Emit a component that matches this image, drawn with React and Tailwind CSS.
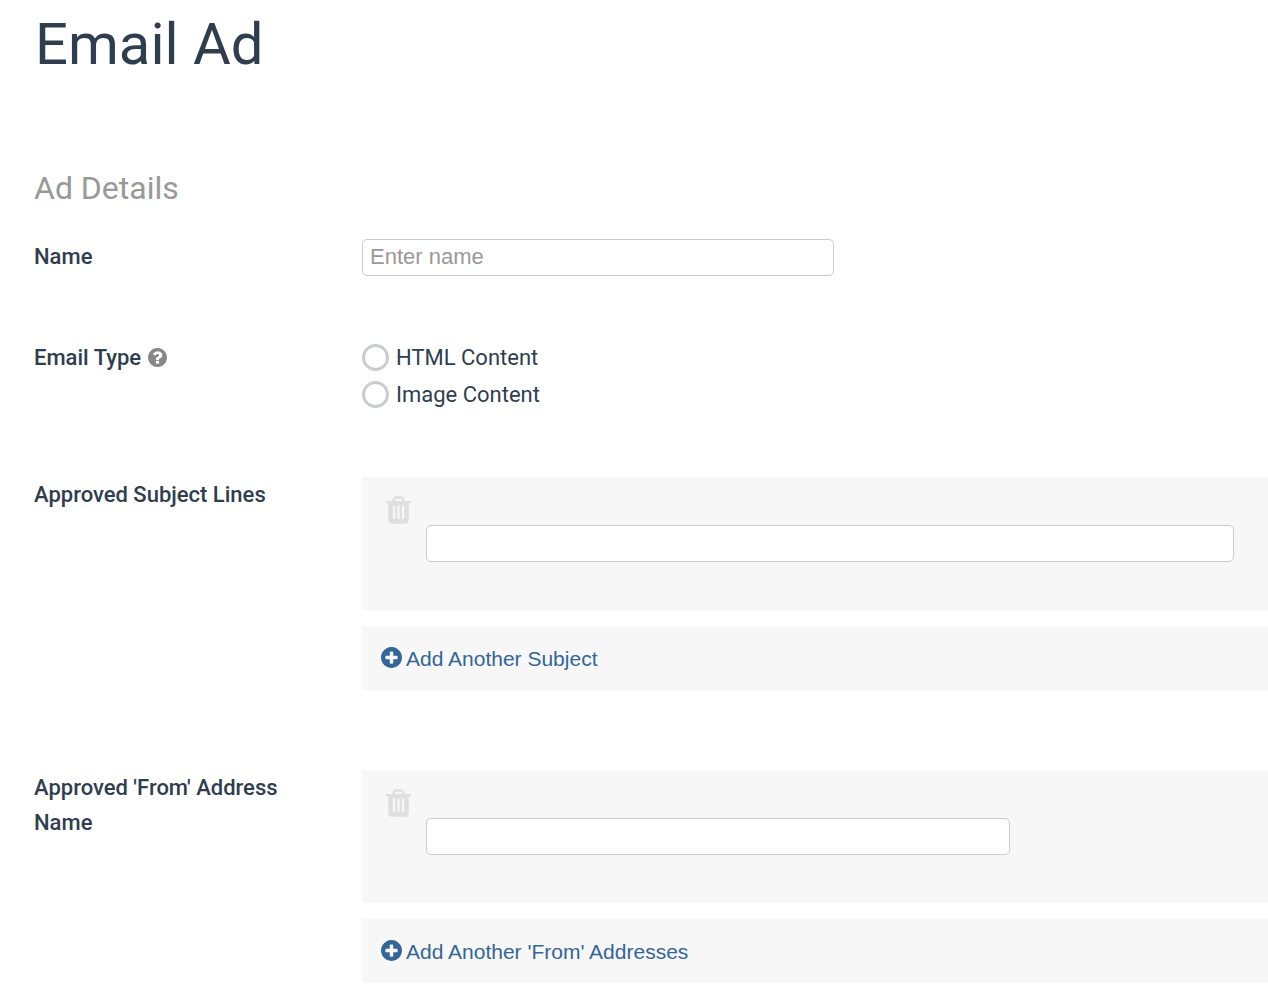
function TrashIcon() {
  return (
    <svg viewBox="192 128 1408 1536" className="h-7 w-[25px]" fill="currentColor" aria-hidden="true">
      <path d="M704 1376v-704q0-14-9-23t-23-9h-64q-14 0-23 9t-9 23v704q0 14 9 23t23 9h64q14 0 23-9t9-23zm256 0v-704q0-14-9-23t-23-9h-64q-14 0-23 9t-9 23v704q0 14 9 23t23 9h64q14 0 23-9t9-23zm256 0v-704q0-14-9-23t-23-9h-64q-14 0-23 9t-9 23v704q0 14 9 23t23 9h64q14 0 23-9t9-23zm-544-992h448l-48-117q-7-9-17-11h-317q-10 2-17 11zm928 32v64q0 14-9 23t-23 9h-96v948q0 83-47 143.500t-113 60.500h-832q-66 0-113-58.500t-47-141.500v-952h-96q-14 0-23-9t-9-23v-64q0-14 9-23t23-9h309l70-167q15-37 54-63t79-26h320q40 0 79 26t54 63l70 167h309q14 0 23 9t9 23z" />
    </svg>
  )
}

function PlusIcon() {
  return (
    <svg viewBox="128 128 1536 1536" className="size-[21px]" fill="currentColor" aria-hidden="true">
      <path d="M1344 960v-128q0-26-19-45t-45-19h-256v-256q0-26-19-45t-45-19h-128q-26 0-45 19t-19 45v256h-256q-26 0-45 19t-19 45v128q0 26 19 45t45 19h256v256q0 26 19 45t45 19h128q26 0 45-19t19-45v-256h256q26 0 45-19t19-45zm320-64q0 209-103 385.500t-279.500 279.500-385.500 103-385.500-103-279.500-279.500-103-385.500 103-385.500 279.500-279.500 385.500-103 385.500 103 279.500 279.500 103 385.500z" />
    </svg>
  )
}

function QuestionIcon() {
  return (
    <svg viewBox="128 128 1536 1536" className="size-[19px]" fill="currentColor" aria-hidden="true">
      <path d="M1024 1376v-192q0-14-9-23t-23-9h-192q-14 0-23 9t-9 23v192q0 14 9 23t23 9h192q14 0 23-9t9-23zm256-672q0-88-55.500-163t-138.500-116-170-41q-243 0-371 213-15 24 8 42l132 100q7 6 19 6 16 0 25-12 53-68 86-92 34-24 86-24 48 0 85.500 26t37.500 59q0 38-20 61t-68 45q-63 28-115.500 86.500t-52.500 125.500v36q0 14 9 23t23 9h192q14 0 23-9t9-23q0-19 21.500-49.500t54.500-49.500q32-18 49-28.500t46-35 44.500-48 28-60.500 12.500-81zm384 192q0 209-103 385.500t-279.500 279.500-385.500 103-385.500-103-279.500-279.500-103-385.500 103-385.500 279.500-279.500 385.500-103 385.500 103 279.500 279.500 103 385.500z" />
    </svg>
  )
}

function FormRow({ label, htmlFor, help, children }) {
  const Label = htmlFor ? 'label' : 'span'
  return (
    <div className="flex">
      <div className="flex w-[328px] shrink-0 items-center gap-[7px] self-start pr-10 text-[22px] leading-[35px] font-medium">
        <Label htmlFor={htmlFor}>{label}</Label>
        {help && (
          <button type="button" aria-label={help} className="text-[#888888]">
            <QuestionIcon />
          </button>
        )}
      </div>
      <div className="min-w-0 flex-1">{children}</div>
    </div>
  )
}

const inputStyle =
  'block h-[37px] rounded-[5px] border border-[#cccccc] bg-white px-[7px] pb-0.5 font-["Liberation_Sans",Arial,sans-serif] text-[22px] placeholder:text-[#999999]'

function RepeatField({ id, label, addLabel, inputWidth }) {
  return (
    <FormRow label={label} htmlFor={id}>
      <div className="flex gap-[15px] bg-[#f7f7f7] pt-[19px] pr-[34px] pb-12 pl-6">
        <button type="button" aria-label="Delete" className="h-7 shrink-0 text-[#dfdfdf]">
          <TrashIcon />
        </button>
        <input id={id} type="text" className={`${inputStyle} mt-[29px] ${inputWidth}`} />
      </div>
      <div className="mt-4 flex h-16 items-center bg-[#f7f7f7] px-[19px] pt-0.5">
        <button
          type="button"
          className="flex items-start gap-1 font-['Liberation_Sans',Arial,sans-serif] text-[21px] leading-6 text-[#336699]"
        >
          <PlusIcon />
          {addLabel}
        </button>
      </div>
    </FormRow>
  )
}

export default function App() {
  return (
    <main className="pt-3 pl-[34px] font-[Roboto,sans-serif] text-[22px] text-[#2f3e4e]">
      <h1 className="pl-px text-[58px] leading-16">Email Ad</h1>
      <h2 className="mt-[92px] text-[32px] leading-10 text-[#999999]">Ad Details</h2>
      <form className="mt-[31px] flex flex-col" onSubmit={(e) => e.preventDefault()}>
        <FormRow label="Name" htmlFor="name">
          <input id="name" type="text" placeholder="Enter name" className={`${inputStyle} w-[472px]`} />
        </FormRow>
        <div className="mt-16">
          <FormRow label="Email Type" help="About email types">
            <div role="radiogroup" aria-label="Email Type" className="flex flex-col gap-px">
              {['HTML Content', 'Image Content'].map((option) => (
                <label key={option} className="flex h-9 items-start gap-[7px] leading-[35px]">
                  <input
                    type="radio"
                    name="emailType"
                    className="mt-1 size-[27px] appearance-none rounded-full border-3 border-[#c9cdd2] bg-white checked:border-8"
                  />
                  {option}
                </label>
              ))}
            </div>
          </FormRow>
        </div>
        <div className="mt-16">
          <RepeatField
            id="subject"
            label="Approved Subject Lines"
            addLabel="Add Another Subject"
            inputWidth="w-full"
          />
        </div>
        <div className="mt-20">
          <RepeatField
            id="from"
            label="Approved 'From' Address Name"
            addLabel="Add Another 'From' Addresses"
            inputWidth="w-[584px]"
          />
        </div>
      </form>
    </main>
  )
}
